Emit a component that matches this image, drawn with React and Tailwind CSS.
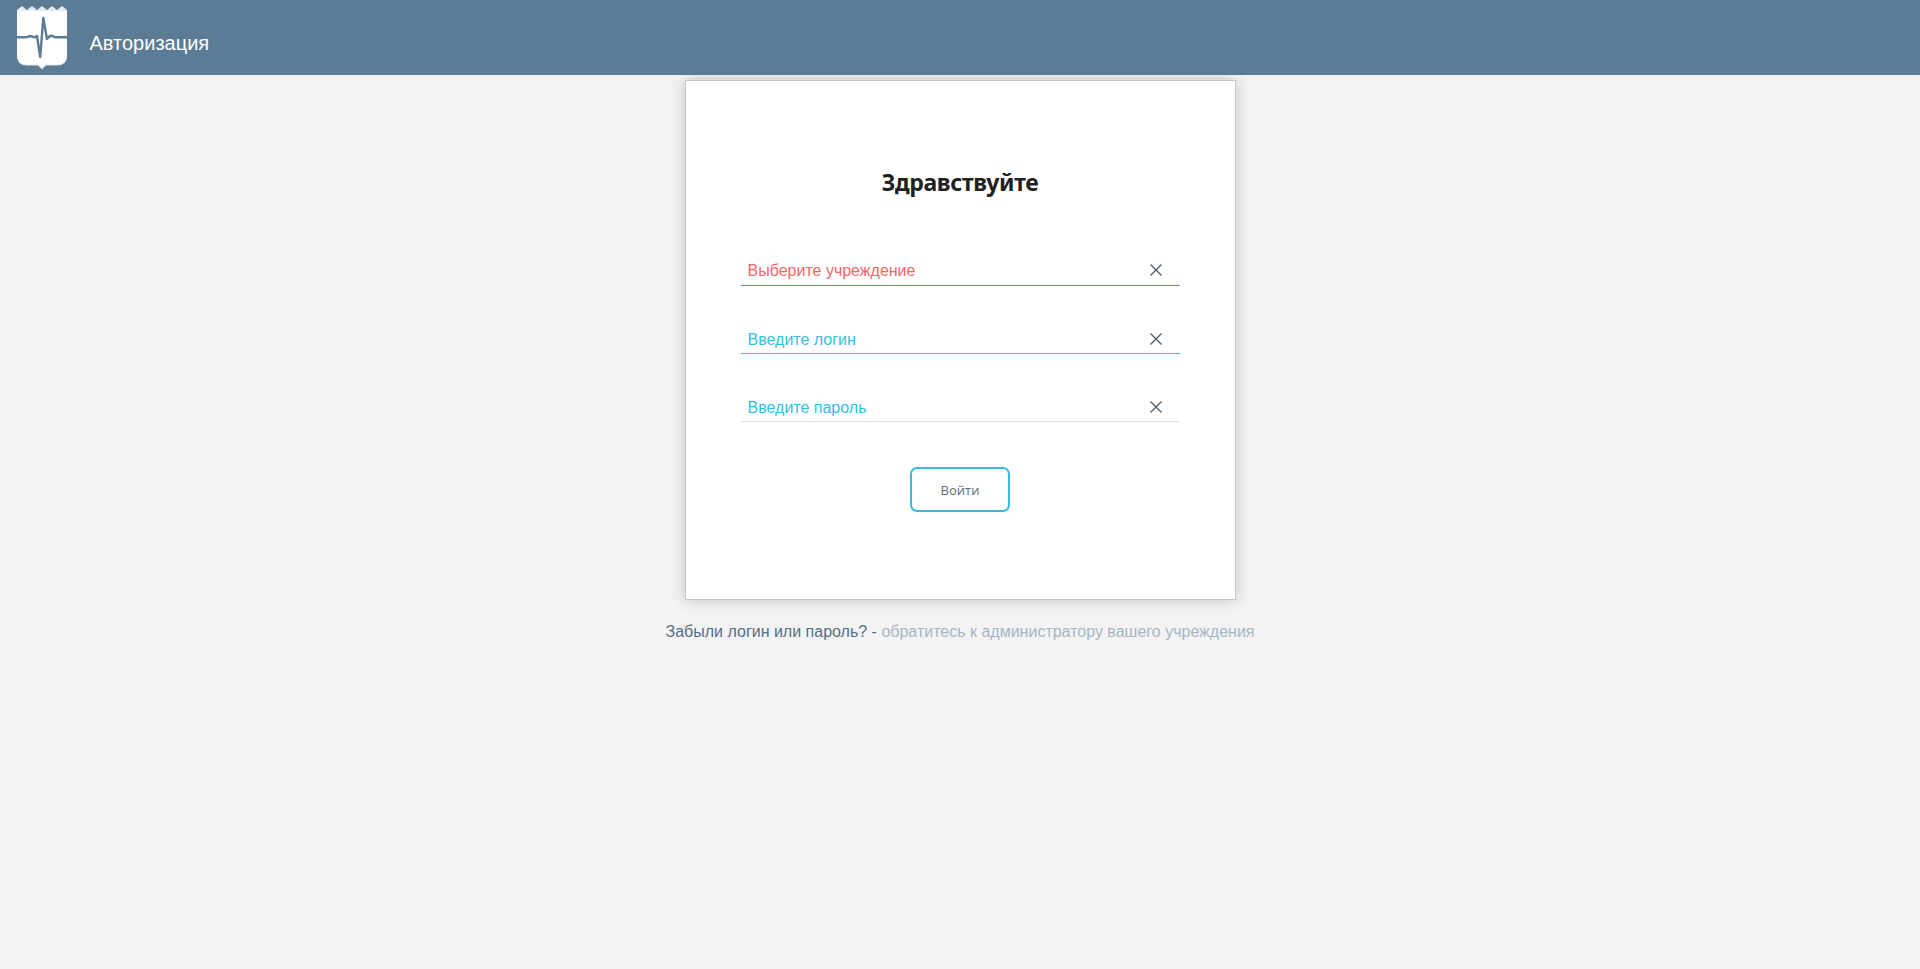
import React from 'react';

function Logo() {
  return (
    <svg width="50" height="64" viewBox="0 0 50 64" fill="none">
      <path d="M0 4 L5 0 L10 4 L15 0 L20 4 L25 0 L30 4 L35 0 L40 4 L45 0 L50 4 V8 H0 Z" fill="#e3e9ee" />
      <path d="M0 5 H50 V50 Q50 59.5 40 59.5 H29 L25 63.5 L21 59.5 H10 Q0 59.5 0 50 Z" fill="#dfe6ec" />
      <path d="M0 5 H50 V49 Q50 58.5 40 58.5 H28.5 L25 62 L21.5 58.5 H10 Q0 58.5 0 49 Z" fill="#ffffff" />
      <path
        d="M0 31.3 H9 C11 31.3 11.5 30 13.5 30 C15.5 30 16 31.8 18 31.3 L20 30 L23.2 51 L26.3 12 L30 33 L32 31 C33 29.5 35 29.5 36.5 30.5 C37.5 31.3 38 31.3 39.5 31.3 H50"
        stroke="#5c7b95"
        strokeWidth="2.4"
        strokeLinejoin="round"
      />
    </svg>
  );
}

function ClearIcon() {
  return (
    <svg width="12" height="12" viewBox="0 0 12 12" fill="none">
      <path d="M0.5 0.5 L11.5 11.5 M11.5 0.5 L0.5 11.5" stroke="#4b5a66" strokeWidth="1.25" />
    </svg>
  );
}

function Field({ label, className }) {
  return (
    <div className={`flex w-[439px] items-center justify-between border-b pl-[6.5px] pr-[18px] ${className}`}>
      <span className="pt-[2px] text-[16px] leading-[20px]">{label}</span>
      <button type="button" aria-label="Очистить">
        <ClearIcon />
      </button>
    </div>
  );
}

export default function App() {
  return (
    <div className="flex min-h-[969px] flex-col bg-[#f3f3f3] font-['Liberation_Sans',Arial,sans-serif]">
      <header className="relative z-10 flex h-[75px] shrink-0 bg-[#5c7b95] pl-[17px] pt-[6px]">
        <Logo />
        <h1 className="ml-[22.5px] mt-[25px] text-[20px] leading-[24px] text-white">Авторизация</h1>
      </header>
      <main className="flex flex-col items-center pt-[5px]">
        <form className="ml-px flex h-[520px] w-[551px] flex-col border border-[#c8c8c8] bg-white pl-[55px] pt-[84px] shadow-[0_0_14px_rgba(0,0,0,0.2)]">
          <h2 className="w-[438px] text-center font-['Noto_Sans','Open_Sans',sans-serif] text-[23px] font-bold leading-[34px] tracking-[-0.35px] text-[#212121]">
            Здравствуйте
          </h2>
          <Field label="Выберите учреждение" className="mt-[56px] h-[31px] border-[#f0625f] text-[#f76566]" />
          <Field label="Введите логин" className="mt-[39px] h-[29px] border-[#4cb8d6] text-[#35bfe0]" />
          <Field label="Введите пароль" className="mt-[39px] h-[29px] border-[#dddddd] text-[#35bfe0]" />
          <button
            type="button"
            className="ml-[169px] mt-[45px] h-[45px] w-[100px] rounded-[7px] border-2 border-[#35bbdc] pt-[2px] font-['Open_Sans','Noto_Sans',sans-serif] text-[13px] text-[#5c6b78]"
          >
            Войти
          </button>
        </form>
        <p className="mt-[22px] text-[16px] leading-[20px] text-[#557086]">
          Забыли логин или пароль? - <a className="text-[#a5b7c6]">обратитесь к администратору вашего учреждения</a>
        </p>
      </main>
    </div>
  );
}
